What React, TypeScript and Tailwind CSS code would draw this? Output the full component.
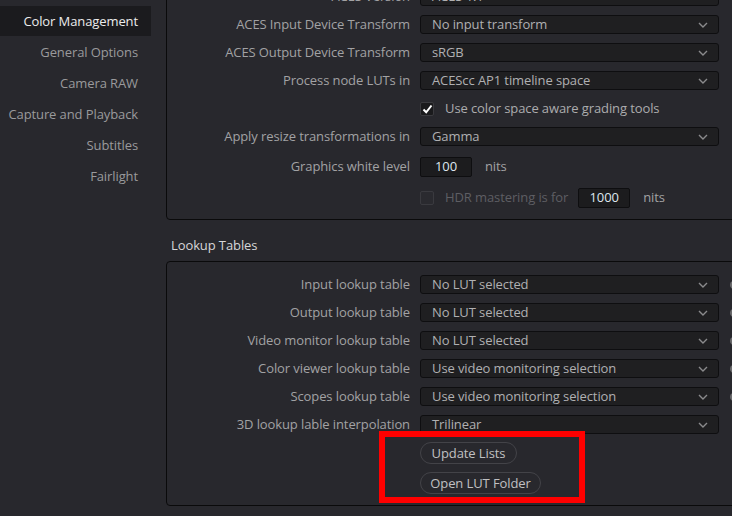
import React from "react";

const sideItems = [
  "Color Management",
  "General Options",
  "Camera RAW",
  "Capture and Playback",
  "Subtitles",
  "Fairlight",
];

function Chevron() {
  return (
    <svg width="10" height="6" viewBox="0 0 10 6" className="shrink-0">
      <path d="M1 1 L5 5 L9 1" fill="none" stroke="#8a8a8c" strokeWidth="1.4" />
    </svg>
  );
}

function Dropdown({ value }: { value: string }) {
  return (
    <div className="w-[299px] h-[19px] shrink-0 flex items-center justify-between pl-[11px] pr-[10px] bg-[#1f1f21] border border-[#0e0e10] rounded-[3px] text-[#b0b0b2]">
      <span>{value}</span>
      <Chevron />
    </div>
  );
}

function Row({ label, children }: { label: string; children: React.ReactNode }) {
  return (
    <div className="flex items-center h-[19px]">
      <div className="w-[243px] shrink-0 text-right text-[#a2a2a4]">{label}</div>
      <div className="ml-[10px] flex items-center">{children}</div>
    </div>
  );
}

function NumberBox({ value }: { value: string }) {
  return (
    <div className="w-[52px] h-[20px] flex items-center justify-center bg-[#1c1c1e] border border-[#0e0e10] rounded-[2px] text-[#dfe6ee]">
      {value}
    </div>
  );
}

function LutRow({ label, value, more = true }: { label: string; value: string; more?: boolean }) {
  return (
    <Row label={label}>
      <Dropdown value={value} />
      {more && (
        <div className="ml-[11px] w-[8px] h-[8px] rounded-full border-[2px] border-[#6a6a6c] shrink-0" />
      )}
    </Row>
  );
}

export default function App() {
  return (
    <div
      className="relative w-[732px] h-[516px] overflow-hidden bg-[#28282d] flex text-[13px] leading-[19px] tracking-[-0.1px]"
      style={{ fontFamily: '"Open Sans", "Noto Sans", sans-serif' }}
    >
      {/* sidebar */}
      <div className="w-[151px] shrink-0 pt-[6px]">
        {sideItems.map((item, i) => (
          <div
            key={item}
            className={
              i === 0
                ? "h-[30px] mb-[1px] flex items-center justify-end pr-[13px] bg-[#1b1b1e] text-[#ececec]"
                : "h-[31px] flex items-center justify-end pr-[13px] text-[#9a9a9c]"
            }
          >
            {item}
          </div>
        ))}
      </div>

      {/* main */}
      <div className="flex-1 pl-[15px]">
        {/* color management panel */}
        <div className="w-[620px] -mt-[30px] border border-[#0a0a0b] rounded-[4px] pt-[16px] pb-[12px] flex flex-col gap-[9px]">
          <Row label="ACES Version">
            <Dropdown value="ACES 1.1" />
          </Row>
          <Row label="ACES Input Device Transform">
            <Dropdown value="No input transform" />
          </Row>
          <Row label="ACES Output Device Transform">
            <Dropdown value="sRGB" />
          </Row>
          <Row label="Process node LUTs in">
            <Dropdown value="ACEScc AP1 timeline space" />
          </Row>
          <Row label="">
            <div className="w-[14px] h-[14px] flex items-center justify-center bg-[#1a1a1c] border border-[#3a3a3e] rounded-[2px]">
              <svg width="11" height="10" viewBox="0 0 11 10">
                <path d="M1.5 5.5 L4.2 8.3 L9.5 1.5" fill="none" stroke="#ffffff" strokeWidth="2" />
              </svg>
            </div>
            <span className="ml-[11px] text-[#acacae]">Use color space aware grading tools</span>
          </Row>
          <Row label="Apply resize transformations in">
            <Dropdown value="Gamma" />
          </Row>
          <div className="mt-[2px]">
            <Row label="Graphics white level">
              <NumberBox value="100" />
              <span className="ml-[13px] text-[#a2a2a4]">nits</span>
            </Row>
          </div>
          <div className="mt-[3px]">
            <Row label="">
              <div className="w-[14px] h-[14px] bg-[#2a2a2f] border border-[#3a3a3f] rounded-[2px]" />
              <span className="ml-[11px] text-[#5e5e63]">HDR mastering is for</span>
              <div className="ml-[10px]">
                <NumberBox value="1000" />
              </div>
              <span className="ml-[13px] text-[#a2a2a4]">nits</span>
            </Row>
          </div>
        </div>

        {/* lookup tables */}
        <div className="mt-[16px] mb-[7px] pl-[5px] h-[18px] leading-[18px] text-[#d6d6d8]">Lookup Tables</div>
        <div className="w-[620px] border border-[#0a0a0b] rounded-[4px] pt-[13px] pb-[11px] flex flex-col gap-[9px]">
          <LutRow label="Input lookup table" value="No LUT selected" />
          <LutRow label="Output lookup table" value="No LUT selected" />
          <LutRow label="Video monitor lookup table" value="No LUT selected" />
          <LutRow label="Color viewer lookup table" value="Use video monitoring selection" />
          <LutRow label="Scopes lookup table" value="Use video monitoring selection" />
          <LutRow label="3D lookup lable interpolation" value="Trilinear" more={false} />
          <div className="pl-[253px] flex flex-col items-start gap-[8px] -mt-[1px]">
            <button className="h-[22px] w-[97px] rounded-full border border-[#434348] text-[#c0c0c2] leading-[20px]">
              Update Lists
            </button>
            <button className="h-[22px] w-[121px] rounded-full border border-[#434348] text-[#c0c0c2] leading-[20px]">
              Open LUT Folder
            </button>
          </div>
        </div>
      </div>

      {/* highlight overlay */}
      <div className="absolute left-[379px] top-[431px] w-[206px] h-[72px] border-[6px] border-[#ff0000] pointer-events-none" />
    </div>
  );
}
